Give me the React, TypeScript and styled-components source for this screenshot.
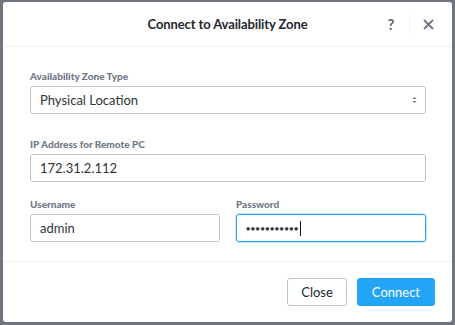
import styled, { createGlobalStyle } from "styled-components";

const GlobalStyle = createGlobalStyle`
  html, body {
    margin: 0;
    padding: 0;
    background: #70757d;
  }
  body {
    font-family: Lato, "Open Sans", sans-serif;
  }
`;

const Backdrop = styled.div`
  width: 455px;
  height: 325px;
  padding: 2px 3px 3px 3px;
  box-sizing: border-box;
`;

const Modal = styled.div`
  background: #fff;
  height: 100%;
  border-radius: 3px;
  display: flex;
  flex-direction: column;
`;

const Header = styled.div`
  height: 44px;
  border-bottom: 1px solid #eef0f2;
  display: flex;
  align-items: center;
  position: relative;
  justify-content: center;
`;

const Title = styled.h2`
  margin: 0;
  font-size: 13px;
  font-weight: 700;
  color: #22272e;
  letter-spacing: -0.1px;
`;

const HeaderActions = styled.div`
  position: absolute;
  right: 14px;
  top: 0;
  height: 100%;
  display: flex;
  align-items: center;
`;

const IconButton = styled.button`
  border: none;
  background: none;
  padding: 0;
  width: 20px;
  height: 20px;
  display: flex;
  align-items: center;
  justify-content: center;
  color: #5f6774;
  font-family: inherit;
  font-size: 15px;
  font-weight: 700;
`;

const Divider = styled.span`
  width: 1px;
  height: 20px;
  background: #eef0f2;
  margin: 0 8px;
`;

const Body = styled.div`
  flex: 1;
  padding: 23px 26px 0 27px;
  display: flex;
  flex-direction: column;
  gap: 19px;
`;

const Field = styled.div`
  display: flex;
  flex-direction: column;
  gap: 4px;
  flex: 1;
`;

const Row = styled.div`
  display: flex;
  gap: 16px;
  margin-top: -8px;
`;

const Label = styled.label`
  font-size: 10px;
  font-weight: 900;
  color: #6e7987;
  line-height: 12px;
`;

const Box = styled.div<{ $focused?: boolean }>`
  height: 28px;
  box-sizing: border-box;
  border: 1px solid ${(p) => (p.$focused ? "#22a5f7" : "#bfc5ce")};
  border-radius: 3px;
  display: flex;
  align-items: center;
  padding: 0 9px;
  font-size: 13px;
  color: #2f3438;
  box-shadow: ${(p) => (p.$focused ? "0 0 0 1px rgba(34,165,247,0.25)" : "none")};
`;

const SelectArrow = styled.svg`
  margin-left: auto;
  margin-right: -1px;
`;

const Caret = styled.span`
  width: 1px;
  height: 15px;
  background: #111;
  margin-left: 1px;
`;

const Dots = styled.span`
  font-size: 7px;
  letter-spacing: 0.6px;
  color: #2f3438;
`;

const Footer = styled.div`
  height: 60px;
  border-top: 1px solid #eef0f2;
  display: flex;
  align-items: center;
  justify-content: flex-end;
  padding-right: 17px;
  gap: 10px;
  margin-top: 19px;
`;

const Button = styled.button<{ $primary?: boolean }>`
  height: 28px;
  border-radius: 3px;
  font-family: inherit;
  font-size: 13px;
  padding: 0 ${(p) => (p.$primary ? "14px" : "13px")};
  border: 1px solid ${(p) => (p.$primary ? "#22a5f7" : "#bfc5ce")};
  background: ${(p) => (p.$primary ? "#22a5f7" : "#fff")};
  color: ${(p) => (p.$primary ? "#fff" : "#22272e")};
`;

export default function App() {
  return (
    <>
      <GlobalStyle />
      <Backdrop>
        <Modal>
          <Header>
            <Title>Connect to Availability Zone</Title>
            <HeaderActions>
              <IconButton>?</IconButton>
              <Divider />
              <IconButton>
                <svg width="11" height="11" viewBox="0 0 11 11">
                  <path d="M1 1L10 10M10 1L1 10" stroke="#6b7380" strokeWidth="1.8" />
                </svg>
              </IconButton>
            </HeaderActions>
          </Header>
          <Body>
            <Field>
              <Label>Availability Zone Type</Label>
              <Box>
                Physical Location
                <SelectArrow width="5" height="8" viewBox="0 0 5 8">
                  <path d="M0.5 3L2.5 1L4.5 3Z M0.5 5L2.5 7L4.5 5Z" fill="#6b7380" />
                </SelectArrow>
              </Box>
            </Field>
            <Field>
              <Label>IP Address for Remote PC</Label>
              <Box>172.31.2.112</Box>
            </Field>
            <Row>
              <Field>
                <Label>Username</Label>
                <Box>admin</Box>
              </Field>
              <Field>
                <Label>Password</Label>
                <Box $focused>
                  <Dots>●●●●●●●●●●●</Dots>
                  <Caret />
                </Box>
              </Field>
            </Row>
          </Body>
          <Footer>
            <Button>Close</Button>
            <Button $primary>Connect</Button>
          </Footer>
        </Modal>
      </Backdrop>
    </>
  );
}
